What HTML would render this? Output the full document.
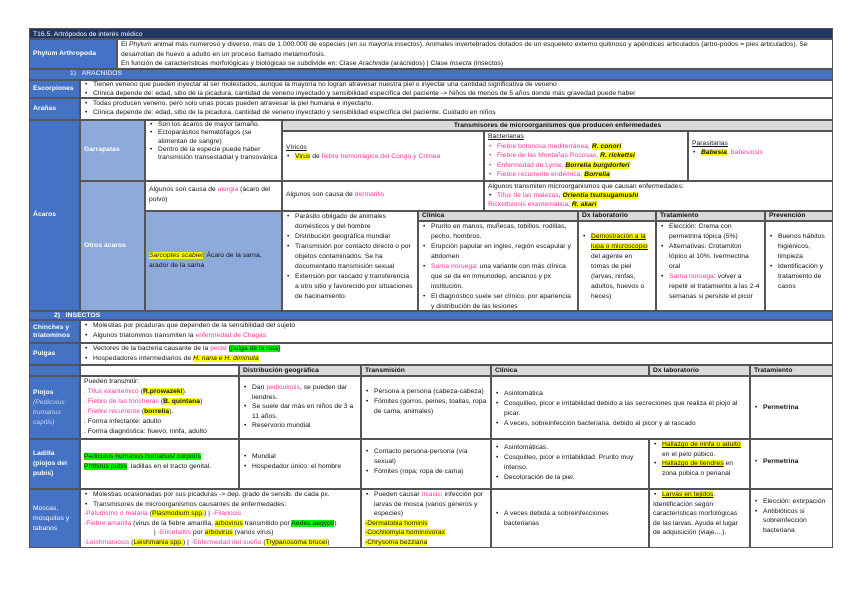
<!DOCTYPE html>
<html><head><meta charset="utf-8"><style>
*{margin:0;padding:0;box-sizing:border-box}
body{width:848px;height:599px;background:#fff;position:relative;overflow:hidden;font-family:"Liberation Sans",sans-serif;font-size:6.7px;line-height:8.6px;color:#111;letter-spacing:0.05px}
.c{position:absolute;border:0.6px solid #555;padding:1px 3px;overflow:hidden;background:#fff}
.b{background:#4472c4;color:#fff;font-weight:bold;display:flex;align-items:center}
.lb{background:#8eaadb;color:#fff;font-weight:bold;display:flex;align-items:center}
.g{background:#d9d9d9;font-weight:bold;padding-top:0;line-height:8px}
.p{color:#ff3399}
.y{background:#ffff00}
.gr{background:#00ff00}
ul{list-style:none}
li{padding-left:9px;position:relative}
li:before{content:"•";position:absolute;left:1px}
.u{text-decoration:underline}
</style></head><body>
<div class="c" style="left:29px;top:28px;width:804px;height:11px;background:#1f3864;color:#fff;line-height:9px">T16.5. Artrópodos de interés médico</div>
<div class="c b" style="left:29px;top:39px;width:88px;height:30px">Phylum Arthropoda</div>
<div class="c" style="left:117px;top:39px;width:716px;height:30px;padding-top:0;line-height:9.5px">El <i>Phylum</i> animal más numeroso y diverso, más de 1.000.000 de especies (en su mayoría insectos). Animales invertebrados dotados de un esqueleto externo quitinoso y apéndices articulados (artro-podos = pies articulados). Se desarrollan de huevo a adulto en un proceso llamado metamorfosis.<br>En función de características morfológicas y biológicas se subdivide en: Clase <i>Arachnida</i> (arácnidos) | Clase <i>Insecta</i> (insectos)</div>
<div class="c b" style="left:29px;top:69px;width:804px;height:11px;padding-left:40px;font-weight:normal">1)&nbsp;&nbsp;&nbsp;ARÁCNIDOS</div>
<div class="c b" style="left:29px;top:80px;width:51px;height:18px">Escorpiones</div>
<div class="c" style="left:80px;top:80px;width:753px;height:18px;padding-top:0"><ul><li>Tienen veneno que pueden inyectar al ser molestados, aunque la mayoría no logran atravesar nuestra piel o inyectar una cantidad significativa de veneno</li><li>Clínica depende de: edad, sitio de la picadura, cantidad de veneno inyectado y sensibilidad específica del paciente -&gt; Niños de menos de 5 años donde más gravedad puede haber</li></ul></div>
<div class="c b" style="left:29px;top:98px;width:51px;height:22px">Arañas</div>
<div class="c" style="left:80px;top:98px;width:753px;height:22px"><ul><li>Todas producen veneno, pero solo unas pocas pueden atravesar la piel humana e inyectarlo.</li><li>Clínica depende de: edad, sitio de la picadura, cantidad de veneno inyectado y sensibilidad específica del paciente. Cuidado en niños</li></ul></div>
<div class="c b" style="left:29px;top:120px;width:51px;height:191px">Ácaros</div>
<div class="c lb" style="left:80px;top:120px;width:65px;height:61px">Garrapatas</div>
<div class="c lb" style="left:80px;top:181px;width:65px;height:130px">Otros ácaros</div>
<div class="c" style="left:145px;top:120px;width:137px;height:61px;padding-top:0;line-height:8.3px"><ul><li>Son los ácaros de mayor tamaño.</li><li>Ectoparásitos hematófagos (se alimentan de sangre)</li><li>Dentro de la especie puede haber transmisión transestadial y transovárica</li></ul></div>
<div class="c g" style="left:282px;top:120px;width:551px;height:11px;text-align:center;line-height:9px">Transmisores de microorganismos que producen enfermedades</div>
<div class="c" style="left:282px;top:131px;width:202px;height:50px;padding-top:12px"><span class="u">Víricos</span><ul><li><span class="y">Virus</span> de <span class="p">fiebre hemorrágica del Congo y Crimea</span></li></ul></div>
<div class="c" style="left:484px;top:131px;width:204px;height:50px;padding-top:0;line-height:9.5px"><span class="u">Bacterianas</span><ul><li class="p">Fiebre botonosa mediterránea, <b class="y" style="color:#111"><i>R. conori</i></b></li><li class="p">Fiebre de las Montañas Rocosas, <b class="y" style="color:#111"><i>R. rickettsi</i></b></li><li class="p">Enfermedad de Lyme, <b class="y" style="color:#111"><i>Borrelia burgdorferi</i></b></li><li class="p">Fiebre recurrente endémica, <b class="y" style="color:#111"><i>Borrelia</i></b></li></ul></div>
<div class="c" style="left:688px;top:131px;width:145px;height:50px;padding-top:8px"><span class="u">Parasitarias</span><ul><li><b class="y"><i>Babesia</i></b>, <span class="p">babesiosis</span></li></ul></div>
<div class="c" style="left:145px;top:181px;width:137px;height:30px;padding-top:3px;line-height:10px">Algunos son causa de <span class="p">alergia</span> (ácaro del polvo)</div>
<div class="c" style="left:282px;top:181px;width:202px;height:30px;padding-top:9px">Algunos son causa de <span class="p">dermatitis</span></div>
<div class="c" style="left:484px;top:181px;width:349px;height:30px;padding-top:0;line-height:9px">Algunos transmiten microorganismos que causan enfermedades:<ul><li><span class="p">Tifus de las malezas</span>, <b class="y"><i>Orientia tsutsugamushi</i></b></li></ul><span class="p">Rickettsiosis exantemática</span>, <b class="y"><i>R. akari</i></b></div>
<div class="c lb" style="left:145px;top:211px;width:137px;height:100px;color:#111;font-weight:normal;line-height:10px"><span><i class="y">Sarcoptes scabiei</i>: Ácaro de la sarna, arador de la sarna</span></div>
<div class="c" style="left:282px;top:211px;width:136px;height:100px;padding-top:0;line-height:10px"><ul><li>Parásito obligado de animales domésticos y del hombre</li><li>Distribución geográfica mundial</li><li>Transmisión por contacto directo o por objetos contaminados. Se ha documentado transmisión sexual</li><li>Extensión por rascado y transferencia a otro sitio y favorecido por situaciones de hacinamiento.</li></ul></div>
<div class="c g" style="left:418px;top:211px;width:160px;height:10px">Clínica</div>
<div class="c g" style="left:578px;top:211px;width:78px;height:10px">Dx laboratorio</div>
<div class="c g" style="left:656px;top:211px;width:109px;height:10px">Tratamiento</div>
<div class="c g" style="left:765px;top:211px;width:68px;height:10px">Prevención</div>
<div class="c" style="left:418px;top:221px;width:160px;height:90px;line-height:10px;padding-top:0"><ul><li>Prurito en manos, muñecas, tobillos, rodillas, pecho, hombros.</li><li>Erupción papular en ingles, región escapular y abdomen</li><li><span class="p">Sarna noruega</span>: una variante con más clínica que se da en inmunodep, ancianos y px institución.</li><li>El diagnóstico suele ser clínico, por apariencia y distribución de las lesiones</li></ul></div>
<div class="c" style="left:578px;top:221px;width:78px;height:90px;padding-top:10px;line-height:10px"><ul><li><span class="y u">Demostración a la lupa o microscopio</span> del agente en tomas de piel (larvas, ninfas, adultos, huevos o heces)</li></ul></div>
<div class="c" style="left:656px;top:221px;width:109px;height:90px;line-height:10px;padding-top:0"><ul><li>Elección: Crema con permetrina tópica (5%)</li><li>Alternativas: Crotamiton tópico al 10%. Ivermectina oral</li><li><span class="p">Sarna noruega</span>: volver a repetir el tratamiento a las 2-4 semanas si persiste el picor</li></ul></div>
<div class="c" style="left:765px;top:221px;width:68px;height:90px;padding-top:10px;line-height:10px"><ul><li>Buenos hábitos higiénicos, limpieza</li><li>Identificación y tratamiento de casos</li></ul></div>
<div class="c b" style="left:29px;top:311px;width:804px;height:9px;line-height:7px;padding-left:24px">2)&nbsp;&nbsp;&nbsp;INSECTOS</div>
<div class="c b" style="left:29px;top:320px;width:51px;height:23px;line-height:8px">Chinches y triatominos</div>
<div class="c" style="left:80px;top:320px;width:753px;height:23px;line-height:10px;padding-top:0"><ul><li>Molestias por picaduras que dependen de la sensibilidad del sujeto</li><li>Algunos triatominos transmiten la <span class="p">enfermedad de Chagas</span></li></ul></div>
<div class="c b" style="left:29px;top:343px;width:51px;height:22px">Pulgas</div>
<div class="c" style="left:80px;top:343px;width:753px;height:22px;line-height:10px;padding-top:0"><ul><li>Vectores de la bacteria causante de la <span class="p">peste</span> <span class="gr">(pulga de la rata)</span></li><li>Hospedadores intermediarios de <i class="y">H. nana e H. diminuta</i></li></ul></div>
<div class="c b" style="left:29px;top:365px;width:51px;height:11px"></div>
<div class="c" style="left:80px;top:365px;width:159px;height:11px"></div>
<div class="c g" style="left:239px;top:365px;width:122px;height:11px;line-height:9px">Distribución geográfica</div>
<div class="c g" style="left:361px;top:365px;width:130px;height:11px;line-height:9px">Transmisión</div>
<div class="c g" style="left:491px;top:365px;width:158px;height:11px;line-height:9px">Clínica</div>
<div class="c g" style="left:649px;top:365px;width:101px;height:11px;line-height:9px">Dx laboratorio</div>
<div class="c g" style="left:750px;top:365px;width:83px;height:11px;line-height:9px">Tratamiento</div>
<div class="c b" style="left:29px;top:376px;width:51px;height:63px;line-height:10px"><span>Piojos<br><i style="font-weight:normal;color:#c9d6f0">(Pediculus humanus capitis)</i></span></div>
<div class="c" style="left:80px;top:376px;width:159px;height:63px;padding-top:0;line-height:10px">Pueden transmitir:<br><span class="p">. Tifus exantemico</span> (<b class="y">R.prowazeki</b>).<br><span class="p">. Fiebre de las trincheras</span> (<b class="y">B. quintana</b>)<br><span class="p">. Fiebre recurrente</span> (<b class="y">borrelia</b>).<br>. Forma infectante: adulto<br>. Forma diagnóstica: huevo, ninfa, adulto</div>
<div class="c" style="left:239px;top:376px;width:122px;height:63px;padding-top:6px;line-height:9.5px"><ul><li>Dan <span class="p">pediculosis</span>, se pueden dar liendres.</li><li>Se suele dar más en niños de 3 a 11 años.</li><li>Reservorio mundial</li></ul></div>
<div class="c" style="left:361px;top:376px;width:130px;height:63px;padding-top:10px;line-height:10px"><ul><li>Persona a persona (cabeza-cabeza)</li><li>Fómites (gorros, peines, toallas, ropa de cama, animales)</li></ul></div>
<div class="c" style="left:491px;top:376px;width:259px;height:63px;padding-top:12px;line-height:10px"><ul><li>Asintomática</li><li>Cosquilleo, picor e irritabilidad debido a las secreciones que realiza el piojo al picar.</li><li>A veces, sobreinfección bacteriana, debido al picor y al rascado</li></ul></div>
<div class="c" style="left:750px;top:376px;width:83px;height:63px;padding-top:27px"><ul><li><b>Permetrina</b></li></ul></div>
<div class="c b" style="left:29px;top:439px;width:51px;height:50px;line-height:10px">Ladilla (piojos del pubis)</div>
<div class="c" style="left:80px;top:439px;width:159px;height:50px;padding-top:12px;line-height:10px"><span class="gr">Pediculus humanus humanus/ corporis</span><br><span class="gr">Phthirus pubis</span>: ladillas en el tracto genital.</div>
<div class="c" style="left:239px;top:439px;width:122px;height:50px;padding-top:12px;line-height:10px"><ul><li>Mundial</li><li>Hospedador único: el hombre</li></ul></div>
<div class="c" style="left:361px;top:439px;width:130px;height:50px;padding-top:7px;line-height:10px"><ul><li>Contacto persona-persona (vía sexual)</li><li>Fómites (ropa; ropa de cama)</li></ul></div>
<div class="c" style="left:491px;top:439px;width:158px;height:50px;padding-top:3px;line-height:10px"><ul><li>Asintomáticas.</li><li>Cosquilleo, picor e irritabilidad. Prurito muy intenso.</li><li>Decoloración de la piel.</li></ul></div>
<div class="c" style="left:649px;top:439px;width:101px;height:50px;padding-top:0;line-height:9.5px"><ul><li><span class="y u">Hallazgo de ninfa o adulto</span> en el pelo púbico.</li><li><span class="y u">Hallazgo de liendres</span> en zona púbica o perianal</li></ul></div>
<div class="c" style="left:750px;top:439px;width:83px;height:50px;padding-top:18px"><ul><li><b>Permetrina</b></li></ul></div>
<div class="c b" style="left:29px;top:489px;width:51px;height:59px;font-weight:normal;line-height:10px">Moscas, mosquitos y tabanos</div>
<div class="c" style="left:80px;top:489px;width:281px;height:59px;padding-top:0;line-height:9.6px"><ul><li>Molestias ocasionadas por sus picaduras -&gt; dep. grado de sensib. de cada px.</li><li>Transmisores de microorganismos causantes de enfermedades:</li></ul><span class="p">-Paludismo o malaria</span> (<span class="y">Plasmodium spp.</span>) | <span class="p">-Filariosis</span><br><span class="p">-Fiebre amarilla</span> (virus de la fiebre amarilla, <span class="y">arbovirus</span> transmitido por <span class="gr">Aedes aegypti</span>) <span style="padding-left:70px">|</span> <span class="p">-Encefalitis</span> por <span class="y">arbovirus</span> (varios virus)<br><span class="p">-Leishmaniosis</span> (<span class="y">Leishmania spp.</span>) | <span class="p">-Enfermedad del sueño</span> (<span class="y">Trypanosoma brucei</span>)</div>
<div class="c" style="left:361px;top:489px;width:130px;height:59px;padding-top:0;line-height:9.6px"><ul><li>Pueden causar <span class="p">miasis</span>: infección por larvas de mosca (varios géneros y especies)</li></ul><span class="y">-Dermatobia hominis</span><br><span class="y">-Cochliomyia hominovorax</span><br><span class="y">-Chrysoma bezziana</span></div>
<div class="c" style="left:491px;top:489px;width:158px;height:59px;padding-top:19px;line-height:10px"><ul><li>A veces debida a sobreinfecciones bacterianas</li></ul></div>
<div class="c" style="left:649px;top:489px;width:101px;height:59px;padding-top:0;line-height:9.6px"><ul><li><span class="y u">Larvas en tejidos</span>.</li></ul>Identificación según características morfológicas de las larvas. Ayuda el lugar de adquisición (viaje,...).</div>
<div class="c" style="left:750px;top:489px;width:83px;height:59px;padding-top:7px;line-height:9.6px"><ul><li>Elección: extirpación</li><li>Antibióticos si sobreinfección bacteriana</li></ul></div>
</body></html>
